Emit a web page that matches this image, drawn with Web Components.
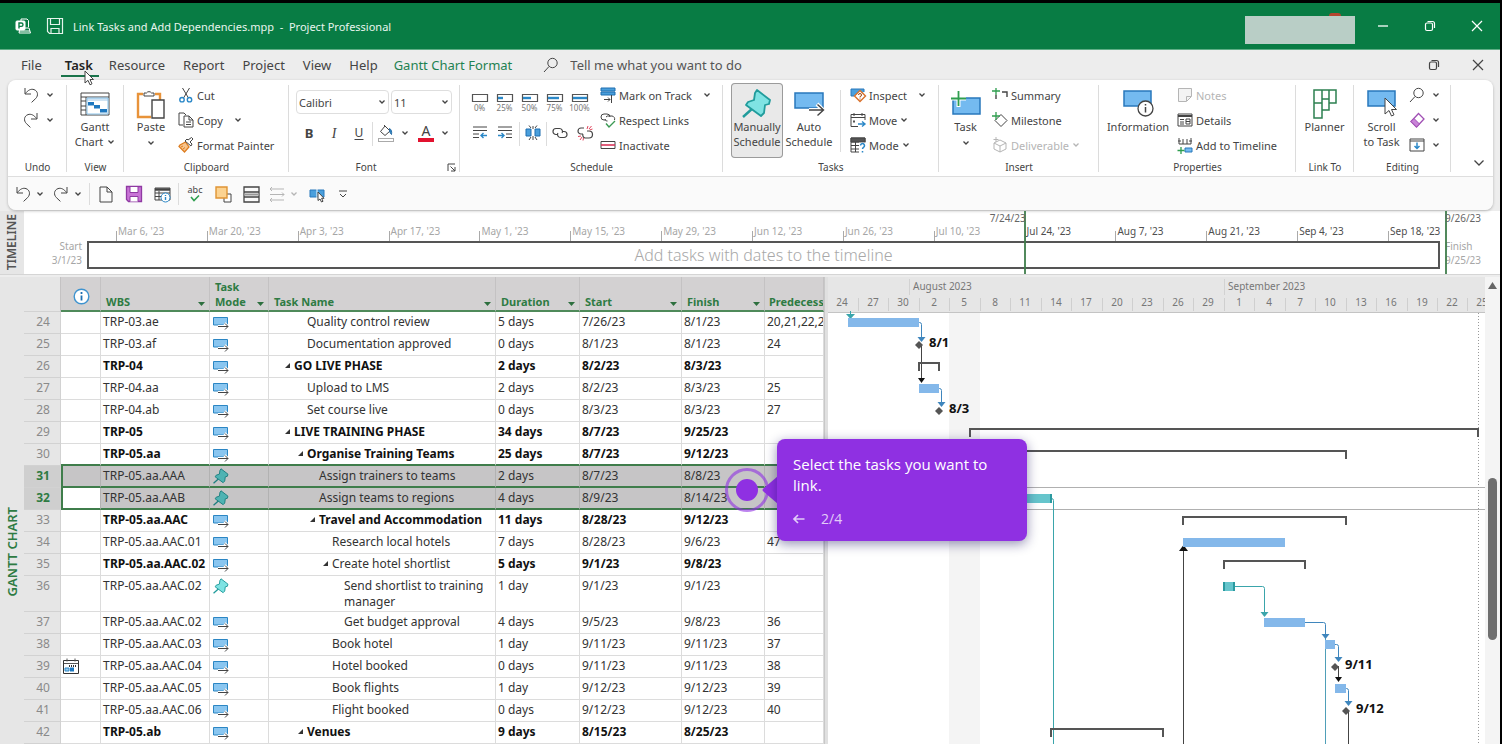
<!DOCTYPE html>
<html lang="en">
<head>
<meta charset="utf-8">
<title>Link Tasks and Add Dependencies.mpp - Project Professional</title>
<style>
  html, body { height: 100%; margin: 0; background: #000; overflow: hidden; }
  body { font-family: "Noto Sans", "Open Sans", sans-serif; font-size: 12px; color: #444; }
</style>
</head>
<body>
<project-window></project-window>

<script>
(function() {
'use strict';

const PIN = (fill, line) => `<path d="M1 28l10-9" stroke="${line}" stroke-width="2.400" fill="none"/><path d="M15 1l13 10-1 4-4 1-1 8-3 3L4 16l2-3 6-2 1-7z" fill="${fill}" stroke="${line}" stroke-width="1.800" stroke-linejoin="round"/>`;
const PERCENT = (w) => `<path d="M.5 1.500h15v7H.5z" fill="#fff" stroke="#555" stroke-width="1.200"/><path d="M1 5h${w}" stroke="#2b88c8" stroke-width="2.400"/>`;
const UNDO = '<path d="M2 1v6h6M2.400 6.600C5 3 8 1.600 11 2.600c4 1.400 4.600 6 1.600 9L8.600 15.400"/>';
const REDO = '<path d="M14 1v6H8M13.600 6.600C11 3 8 1.600 5 2.600c-4 1.400-4.600 6-1.600 9l4 3.800"/>';

// name: [viewBox width, viewBox height, markup]
const ICONS = {
  app: [16, 16, '<path d="M6 5V1h6l1.500 1.500V9M9 10h5l1.500 5H4l.5-3" stroke="#fff"/><path d="M4 13h11" stroke="#fff"/><rect x="1" y="3" width="9" height="9" rx="1" fill="#fff"/><path d="M4 10.500V5h2.300a1.700 1.700 0 0 1 0 3.400H4" stroke="#087a43" stroke-width="1.400"/>'],
  floppy: [18, 18, '<path d="M1.500 1.500h15v15h-13l-2-2zM4.500 1.500v6h9v-6M5 16.500v-5h8v5" stroke="#e6f4ec" stroke-width="1.200"/>'],
  minimize: [12, 12, '<path d="M1 6h10" stroke-width="1.300"/>'],
  restore: [12, 12, '<rect x="1.500" y="3" width="7" height="7.500" rx="1.500" stroke-width="1.200"/><path d="M3.500 1.500h5a2 2 0 0 1 2 2V8" stroke-width="1.200"/>'],
  close: [12, 12, '<path d="M1 1l10 10M11 1L1 11" stroke-width="1.200"/>'],
  search: [16, 16, '<circle cx="9.500" cy="6" r="4.700"/><path d="M6 9.500L1 15"/>'],
  chevron: [8, 6, '<path d="M1.500 1.500L4 4l2.500-2.500" stroke-width="1.300"/>'],
  collapse: [12, 8, '<path d="M1.500 1.500L6 6l4.500-4.500" stroke-width="1.300"/>'],
  undo: [16, 16, UNDO],
  redo: [16, 16, REDO],
  gantt: [30, 24, '<path d="M1 1h28v22H1zM1 5h28M6 5v18M1 9h5M1 14h5M1 18h5" /><path d="M7 6h21v3H7z" fill="#cfe3f3" stroke="none"/><path d="M7 6h21v16H7z" stroke="#8cc4ea" /><path d="M8 10h6v3.500H8zM14 13h6v3.500h-6zM20 17h7v3.500h-7z" fill="#1e78c0" stroke="none"/>'],
  paste: [30, 31, '<path d="M7 6H2v23h13M19 6h5v6" stroke="#e8933a" stroke-width="2.400"/><path d="M8 8V5h2.500a3 3 0 0 1 5 0H18v3z" fill="#fff"/><path d="M16 12h12v18H16z" fill="#fff" stroke-width="1.400"/>'],
  cut: [16, 16, '<path d="M4.500 1l6 10M11.500 1l-6 10"/><circle cx="4" cy="12.700" r="2.200" stroke="#2b88c8" stroke-width="1.400"/><circle cx="11.500" cy="12.700" r="2.200" stroke="#2b88c8" stroke-width="1.400"/>'],
  copy: [16, 16, '<path d="M5 13H1V1h5l2 2"/><path d="M6 4h5l4 4v7H6z" fill="#fff"/><path d="M11 4v4h4M8 10h5M8 12.500h5"/>'],
  painter: [16, 16, '<path d="M7.500 5L2 8l-1 1.500L6.500 15 11 10z" fill="#f7c48c" stroke="#dd7d20" stroke-width="1.300"/><path d="M3 10l2-1M5 12l2-1.500" stroke="#dd7d20"/><path d="M7 4l6 5 1-2-2-2 3-3-1.500-1.500L10 3 9 2z" fill="#fff"/>'],
  bold: [16, 16, '<text x="8" y="13" text-anchor="middle" font-size="13" font-weight="700">B</text>'],
  italic: [16, 16, '<text x="8" y="13" text-anchor="middle" font-size="14" font-style="italic" font-family="Liberation Serif, serif">I</text>'],
  underline: [16, 16, '<text x="8" y="12" text-anchor="middle" font-size="12">U</text><path d="M3.500 14.500h9"/>'],
  fill: [16, 18, '<path d="M7 2l5 5-5 4.500L2.500 7.500zM6 1l3 3"/><path d="M11.500 4.500c2 1 2.500 3 2 6-1.500-1-2-3-2-6z" fill="#2b88c8" stroke="#2b6fa8"/><rect x=".5" y="14.500" width="15" height="3" fill="#fff" stroke="#aaa"/>'],
  fontcolor: [16, 18, '<text x="8" y="12" text-anchor="middle" font-size="14">A</text><path d="M0 14h16v4H0z" fill="#e2122f" stroke="none"/>'],
  p0: [16, 10, PERCENT(0)],
  p25: [16, 10, PERCENT(5)],
  p50: [16, 10, PERCENT(8)],
  p75: [16, 10, PERCENT(11)],
  p100: [16, 10, PERCENT(14)],
  outdent: [16, 16, '<path d="M1 2h14M1 5.500h14M1 9h6M1 12.500h6"/><path d="M15 10.500H9M11.500 8L9 10.500l2.500 2.500" stroke="#2b88c8" stroke-width="1.400"/>'],
  indent: [16, 16, '<path d="M1 2h14M1 5.500h14M9 9h6M9 12.500h6"/><path d="M1 10.500h6M4.500 8L7 10.500 4.500 13" stroke="#2b88c8" stroke-width="1.400"/>'],
  split: [16, 16, '<path d="M1 4h5v7H1zM10 4h5v7h-5z" fill="#4a9fdc" stroke="#1e6fb0"/><path d="M8 1v3M4 .5L6 3M12 .5L10 3M8 15v-4M4 15l2-3M12 15l-2-3"/>'],
  link: [16, 16, '<path d="M6 9.500H4a3 3 0 0 1 0-6h3.500a3 3 0 0 1 2.600 4.500" stroke-width="1.200"/><path d="M10 6.500h2a3 3 0 0 1 0 6H8.500a3 3 0 0 1-2.600-4.500" stroke-width="1.200"/>'],
  unlink: [16, 16, '<path d="M6 9H4a3 3 0 0 1 0-6h3M10 6h2a3 3 0 0 1 0 7H8a3 3 0 0 1-2-4" stroke-width="1.200"/><path d="M11 1l-1 3M14.500 1L12 4M15.500 4l-3 1M4 11l-3 .5M5 12l-2 3M6.500 13L6 15.500" stroke="#e0455d"/>'],
  track: [16, 16, '<path d="M1 1h14v3H1zM1 5h14v3H1z" fill="#4a9fdc" stroke="#1e6fb0"/><path d="M11.500 8v8M4 12.500h6M8 10.500l2 2-2 2" />'],
  respect: [16, 16, '<path d="M6 8H4a3 3 0 0 1 0-6h3a3 3 0 0 1 3 3M6 5a3 3 0 0 1 3-1h3a3 3 0 0 1 2.500 4"/><path d="M5 7c.5 1.500 1 2 2.500 2" /><path d="M6 11.500l3 3.500 6-6" stroke="#3c9a55" stroke-width="1.400"/>'],
  inactivate: [16, 16, '<path d="M1 4.500h14v7H1z" /><path d="M1 8h14" stroke="#d9365a" stroke-width="1.600"/>'],
  pin: [30, 29, PIN('#7fe3e3', '#219c9c')],
  pinDark: [30, 29, PIN('#4fb3b3', '#1d7f80')],
  auto: [31, 24, '<path d="M1 1h28v15H1z" fill="#74baf0" stroke="#2878bc" stroke-width="1.500"/><path d="M15 18h14M23 12l6 6-6 6" stroke="#fff" stroke-width="4"/><path d="M15 18h14M23.500 12.500L29.500 18l-6 5.500" stroke-width="1.400"/>'],
  mode: [16, 13, '<path d="M.5.5h14v7.500H.5z" fill="#8ac6f0" stroke="#2b86c4"/><path d="M5 9.500h10M11.500 6.500l3.500 3-3.500 3" stroke="#fff" stroke-width="3"/><path d="M5 9.500h10M12 6.500l3 3-3 3" stroke="#444"/>'],
  inspect: [16, 16, '<path d="M4 9H1V2h13v3" fill="#4a9fdc" stroke="#2878bc"/><path d="M10 3.500l5.500 5.500L10 14.500 4.500 9z" fill="#fff" stroke="#d9702a" stroke-width="1.400"/><path d="M8.500 8a1.500 1.500 0 1 1 1.500 1.500v1M10 11.500v1" stroke="#a04a18"/>'],
  move: [16, 16, '<path d="M15 8V2.500H1v12h7M1 5.500h14M4 1v3M12 1v3"/><path d="M3 8.500h2v2H3z" fill="#555" stroke="none"/><path d="M8 12h7M12 9.500l3 2.500-3 2.500" stroke="#2b88c8" stroke-width="1.400"/>'],
  mode2: [16, 16, '<path d="M1 1h14v14H1zM1 5h14M1 8.500h9M1 12h9M5.500 5v10M10 5v10"/><path d="M1 1h14v4H1z" fill="#555"/><path d="M9 5.500h7V16H9z" fill="#fff" stroke="none"/><path d="M10.500 8.500a2 2 0 1 1 3.200 1.600c-1 .7-1.200 1-1.200 2M12.500 14v1.500" stroke="#2b88c8" stroke-width="1.500"/>'],
  addtask: [30, 25, '<path d="M2 7h27v16H2z" fill="#74baf0" stroke="#2878bc" stroke-width="1.500"/><path d="M7.500 0v16M0 7.500h15" stroke="#fff" stroke-width="4"/><path d="M7.500 0v15M0 7.500h15" stroke="#2f9e4f" stroke-width="1.800"/>'],
  summary: [16, 16, '<path d="M4 1v7M0 4h8" stroke="#2f9e4f" stroke-width="1.300"/><path d="M4 8v4M10 5h5v5" stroke-width="1.400"/>'],
  milestone: [16, 16, '<path d="M9 2.500L15 8.500l-6 6-6-6z" fill="#fff"/><path d="M4 0v8M0 4h8" stroke="#2f9e4f" stroke-width="1.300"/>'],
  deliverable: [16, 16, '<path d="M8 3l6 3v6l-6 3-6-3V6zM2 6l6 3 6-3M8 9v6M4 0v5M1.500 2.500h5" />'],
  information: [30, 28, '<path d="M1 1h27v15H1z" fill="#74baf0" stroke="#2878bc" stroke-width="1.500"/><circle cx="22.500" cy="18.500" r="7.500" fill="#fff" stroke-width="1.300"/><path d="M22.500 17v5.500M22.500 14v1.500" stroke-width="1.500"/>'],
  notes: [16, 16, '<path d="M1.500 1.500h13v8l-5 5h-8z" fill="#f3f3f3"/><path d="M14 9.500H9.500V14"/>'],
  details: [16, 16, '<path d="M1 2h14v12H1z"/><path d="M1 4h14" stroke-width="2"/><path d="M3 7.500h4M3 10h4M3 12h4M9 7h4v5H9zM9 9.500h4"/>'],
  addtimeline: [16, 17, '<path d="M2 1v6h12V1M6 2v5M10 2v5M1 4h3M12 4h3"/><path d="M8 11h7v4H8z" fill="#74baf0" stroke="#2878bc"/><path d="M4 10v7M.5 13.500h7" stroke="#2f9e4f" stroke-width="1.300"/>'],
  planner: [24, 30, '<path d="M1 1h22v13h-7v7H9v8H1zM9 1v20M16 1v13M1 14h8M9 10h7" stroke="#2d8050" stroke-width="1.500"/>'],
  scroll: [30, 28, '<path d="M1 1h27v15H1z" fill="#74baf0" stroke="#2878bc" stroke-width="1.500"/><path d="M18 8v16l4-3.500 2.500 5.500 2.500-1.200-2.500-5.300h5z" fill="#fff"/>'],
  eraser: [16, 16, '<path d="M9.500 1.500L15 7l-7.500 8L2 9.500z" fill="#fff" stroke="#a04fb4" stroke-width="1.300"/><path d="M5 6.500l5.500 5.500-3 3L2 9.500z" fill="#c983d8" stroke="#a04fb4"/>'],
  filldown: [16, 16, '<path d="M1 2h14v12H1zM1 4h14"/><path d="M8 5.500v6M5.500 9L8 11.500 10.500 9" stroke="#2b88c8" stroke-width="1.500"/>'],
  launcher: [9, 9, '<path d="M1 8V1h7M3.500 3.500l4.500 4.500M8 4v4H4"/>'],
  doc: [14, 17, '<path d="M1 1h7l5 5v10H1zM8 1v5h5"/>'],
  savePurple: [18, 18, '<path d="M1.500 1.500h15v15h-13l-2-2z" fill="#c873d6" stroke="#8f3aa2" stroke-width="1.300"/><path d="M5 1.500h8v6H5zM5 16.500v-5h8v5" fill="#fff" stroke="#8f3aa2"/>'],
  tableInfo: [17, 17, '<path d="M1 2h15v12H1zM1 7h15M1 10.500h15M5 5v9"/><path d="M1 3.500h15" stroke-width="2.500"/><circle cx="11.500" cy="11.500" r="4.500" fill="#fff" stroke="#2b88c8"/><path d="M11.500 11v3M11.500 9v1" stroke="#2b88c8" stroke-width="1.400"/>'],
  spell: [18, 18, '<text x="9" y="8" text-anchor="middle" font-size="9">abc</text><path d="M5 12l3 3.500 5-5" stroke="#2f9e4f" stroke-width="1.600"/>'],
  shapes: [17, 17, '<path d="M9 8h7v8H9z" fill="#fff"/><path d="M1 1h11v11H1z" fill="#fcd391" stroke="#df9434" stroke-width="1.400"/>'],
  rows: [17, 17, '<path d="M1 1h15v15H1zM1 6h15M1 11h15" stroke-width="1.300"/><path d="M1 8.500h15" stroke="#999" stroke-width="2"/>'],
  arrange: [16, 17, '<path d="M1 3h14M1 8.500h14M1 14h14M3 1L1 3l2 2M13 6.500l2 2-2 2M3 12l-2 2 2 2"/>'],
  pick: [17, 15, '<path d="M1 3h14v7H1z" fill="#4a9fdc" stroke="#2878bc"/><path d="M8 2v9" stroke="#fff"/><path d="M9 5v8.500l2-1.500 1.500 3 1.500-.7-1.400-3H15z" fill="#fff"/>'],
  more: [10, 10, '<path d="M1 2h8"/><path d="M2 5l3 3 3-3"/>'],
  infoHead: [17, 17, '<circle cx="8.500" cy="8.500" r="7.300" fill="#fff" stroke="#3e93cf" stroke-width="1.400"/><path d="M8.500 7.500v5M8.500 4v2" stroke="#1d6fb2" stroke-width="1.800"/>'],
  calendar: [16, 16, '<path d="M.5 2.500h15v13H.5z" fill="#fff"/><path d="M1 5.500h14M4 .5v3M12 .5v3" stroke="#555"/><path d="M6 8h7" stroke-dasharray="1 1" stroke-width="2"/><path d="M2 10h4v3H2z" fill="#9cc9ea" stroke="#2b88c8"/><path d="M7 9.500h4v4H7z" fill="#1e78c0" stroke="none"/>'],
  back: [12, 10, '<path d="M11.500 5H1.500M5 1L1 5l4 4" stroke-width="1.700"/>'],
  cursor: [10, 16, '<path d="M1 1v12l3-2.700 2 4.500 2-1-2-4.300h3.500z" fill="#fff"/>'],
};

function svg(name, scale = 1) {
  const [w, h, body] = ICONS[name];
  return `<svg width="${Math.round(w * scale)}" height="${Math.round(h * scale)}" viewBox="0 0 ${w} ${h}" fill="none" stroke="currentColor" aria-hidden="true">${body.replace(/<text /g, '<text fill="currentColor" stroke="none" ')}</svg>`;
}

const BUTTON_RESET = `
  * { box-sizing: border-box; }
  button, input, select { font: inherit; color: inherit; background: none; border: 0; margin: 0; padding: 0; }
  svg { display: block; flex: none; overflow: visible; }
`;

/* ---------- title bar ---------- */
customElements.define('title-bar', class extends HTMLElement {
  constructor() {
    super();
    this.attachShadow({mode: 'open'}).innerHTML = `
      <style>
      ${BUTTON_RESET}
      :host { display: flex; align-items: center; height: 47px; background: #087c44; color: #fff; font-size: 11px; padding-left: 15px; box-sizing: border-box; border-bottom: 1px solid #5fae86; }
      .save { margin: 0 9px 0 15px; }
      .name { color: #e9f5ee; white-space: pre; }
      .spacer { flex: 1; }
      .account { position: relative; width: 110px; height: 28px; margin: 8px 4px 0 0; background: #b9cec6; }
      .account::before { content: ""; position: absolute; right: 14px; top: -3px; width: 12px; height: 3px; border-radius: 6px 6px 0 0; background: #b5452f; }
      .win { width: 47px; height: 47px; display: grid; place-items: center; }
      </style>
      ${svg('app')}
      <button class="save" aria-label="Save">${svg('floppy')}</button>
      <span class="name">Link Tasks and Add Dependencies.mpp  -  Project Professional</span>
      <span class="spacer"></span>
      <span class="account"></span>
      <button class="win" aria-label="Minimize">${svg('minimize')}</button>
      <button class="win" aria-label="Restore">${svg('restore')}</button>
      <button class="win" aria-label="Close">${svg('close')}</button>
    `;
  }
});

/* ---------- ribbon tabs ---------- */
customElements.define('ribbon-tabs', class extends HTMLElement {
  constructor() {
    super();
    this.attachShadow({mode: 'open'}).innerHTML = `
      <style>
      ${BUTTON_RESET}
      :host { position: relative; display: flex; height: 30px; font-size: 13px; padding-left: 12px; box-sizing: border-box; color: #444; }
      .tab { padding: 0 9px; }
      .tab[aria-selected=true] { position: relative; margin-left: 7px; padding: 0 7px; font-weight: 600; color: #222; }
      .tab[aria-selected=true]::after { content: ""; position: absolute; left: 3px; right: 1px; bottom: 3px; height: 2px; background: #19734a; }
      .tab.context { margin-left: -2px; color: #1f8252; }
      label { display: flex; align-items: center; gap: 11px; margin-left: 22px; flex: 1; }
      input { flex: 1; outline: 0; }
      input::placeholder { color: #555; opacity: 1; }
      .win { width: 44px; display: grid; place-items: center; }
      .pointer { position: absolute; left: 84px; top: 20px; z-index: 2; }
      </style>
      <button class="tab">File</button>
      <button class="tab" aria-selected="true">Task</button>
      <button class="tab">Resource</button>
      <button class="tab">Report</button>
      <button class="tab">Project</button>
      <button class="tab">View</button>
      <button class="tab">Help</button>
      <button class="tab context">Gantt Chart Format</button>
      <label>${svg('search')}<input type="text" placeholder="Tell me what you want to do" aria-label="Tell me what you want to do"></label>
      <button class="win" aria-label="Restore document">${svg('restore')}</button>
      <button class="win" aria-label="Close document">${svg('close')}</button>
      <span class="pointer">${svg('cursor')}</span>
    `;
  }
});

/* ---------- ribbon parts ---------- */
customElements.define('ribbon-group', class extends HTMLElement {
  constructor() {
    super();
    this.attachShadow({mode: 'open'}).innerHTML = `
      <style>
      ${BUTTON_RESET}
      :host { display: flex; flex-direction: column; flex: none; box-sizing: border-box; margin-top: 3px; font-size: 11px; background: linear-gradient(#dcdcdc, #dcdcdc) right 2px / 1px 87px no-repeat; }
      .body { display: flex; height: 75px; }
      .foot { display: flex; align-items: center; height: 18px; font-size: 10px; }
      .foot span { flex: 1; text-align: center; }
      .foot button { padding: 0 4px; }
      </style>
      <div class="body"><slot></slot></div>
      <div class="foot"><span></span></div>
    `;
  }
  connectedCallback() {
    this.shadowRoot.querySelector('.foot span').textContent = this.getAttribute('label');
    if (this.hasAttribute('launcher')) {
      this.shadowRoot.querySelector('.foot').insertAdjacentHTML('beforeend', `<button aria-label="More settings">${svg('launcher')}</button>`);
    }
  }
});

customElements.define('ribbon-button', class extends HTMLElement {
  connectedCallback() {
    const label = this.getAttribute('label') || '';
    const drop = this.getAttribute('drop');
    const large = this.hasAttribute('large');
    const chevron = `<i>${svg('chevron')}</i>`;
    const text = !label ? '' : label.split('|').map((line, i, all) =>
      `<span>${line}${large && drop === 'menu' && i === all.length - 1 ? chevron : ''}</span>`).join('');
    const tail = (drop === 'split' || (drop && !large)) ? chevron : '';
    this.attachShadow({mode: 'open'}).innerHTML = `
      <style>
      ${BUTTON_RESET}
      :host { display: block; }
      button { display: flex; align-items: center; height: 25px; gap: 3px; padding-bottom: 1px; white-space: nowrap; line-height: 15px; }
      .pic { display: grid; place-items: center; min-width: 16px; }
      :host([drop=split]) i { margin-left: 8px; }
      :host([bare]) button { gap: 7px; }
      :host([bare]) i { margin: 0; }
      :host([disabled]) button { color: #b5b5b5; }
      :host([large]) button { flex-direction: column; gap: 0; height: 75px; width: 100%; padding-top: 5px; justify-content: flex-start; border-radius: 4px; }
      :host([large]) .pic { height: 31px; }
      :host([large]) span { display: flex; align-items: center; gap: 4px; }
      :host([large]) > button > i { margin: 6px 0 0; }
      :host([pressed]) button { background: #e9e9e9; box-shadow: inset 0 0 0 1px #9b9b9b; }
      </style>
      <button ${this.hasAttribute('disabled') ? 'disabled' : ''} ${label ? '' : `aria-label="${this.getAttribute('icon')}"`}>
        <div class="pic">${svg(this.getAttribute('icon'))}</div>${text}${tail}
      </button>
    `;
  }
});

customElements.define('percent-button', class extends HTMLElement {
  connectedCallback() {
    const v = this.getAttribute('value');
    this.attachShadow({mode: 'open'}).innerHTML = `
      <style>
      ${BUTTON_RESET}
      :host { display: block; width: 25px; }
      button { display: flex; flex-direction: column; align-items: center; width: 25px; font-size: 8px; line-height: 9px; color: #777; padding-top: 10px; }
      </style>
      <button>${svg('p' + v)}<span>${v}%</span></button>
    `;
  }
});

customElements.define('ribbon-select', class extends HTMLElement {
  connectedCallback() {
    this.attachShadow({mode: 'open'}).innerHTML = `
      <style>
      ${BUTTON_RESET}
      :host { display: block; }
      label { display: grid; grid-template-columns: 1fr; align-items: center; border: 1px solid #dedede; border-radius: 4px; height: 24px; }
      select { appearance: none; grid-area: 1 / 1; width: 100%; height: 100%; padding-left: 2px; outline: 0; }
      i { grid-area: 1 / 1; justify-self: end; margin-right: 2px; pointer-events: none; }
      </style>
      <label><select aria-label="${this.getAttribute('name')}"><option>${this.getAttribute('value')}</option></select><i>${svg('chevron')}</i></label>
    `;
  }
});

customElements.define('ribbon-bar', class extends HTMLElement {
  constructor() {
    super();
    this.attachShadow({mode: 'open'}).innerHTML = `
      <style>
      ${BUTTON_RESET}
      :host { display: flex; height: 96px; background: #fff; border-radius: 8px 8px 0 0; }
      .stack { display: flex; flex-direction: column; }
      .row { display: flex; align-items: center; height: 38px; }
      .row > ribbon-button { width: 25px; }
      .row > ribbon-button[drop] { width: 38px; }
      .row.tools { height: 25px; padding-left: 5px; }
      .sep { width: 1px; height: 24px; margin-right: 5px; background: #dcdcdc; }
      .tall { width: 1px; height: 62px; align-self: center; margin: 0 9px 0 5px; background: #dcdcdc; }
      ribbon-button[large] { flex: none; }
      .undo { padding-left: 15px; }
      .more { margin-left: auto; align-self: flex-end; padding: 0 8px 9px; }
      </style>

      <ribbon-group label="Undo" style="width:59px">
        <div class="stack undo">
          <ribbon-button icon="undo" drop="menu" bare></ribbon-button>
          <ribbon-button icon="redo" drop="menu" bare></ribbon-button>
        </div>
      </ribbon-group>
      <ribbon-group label="View" style="width:57px">
        <ribbon-button large icon="gantt" label="Gantt|Chart" drop="menu" style="width:56px"></ribbon-button>
      </ribbon-group>
      <ribbon-group label="Clipboard" style="width:165px">
        <ribbon-button large icon="paste" label="Paste" drop="split" style="width:54px"></ribbon-button>
        <div class="stack">
          <ribbon-button icon="cut" label="Cut"></ribbon-button>
          <ribbon-button icon="copy" label="Copy" drop="split"></ribbon-button>
          <ribbon-button icon="painter" label="Format Painter"></ribbon-button>
        </div>
      </ribbon-group>
      <ribbon-group label="Font" launcher style="width:171px">
        <div class="stack" style="padding-left:7px">
          <div class="row" style="gap:2px">
            <ribbon-select name="Font" value="Calibri" style="width:93px"></ribbon-select>
            <ribbon-select name="Font size" value="11" style="width:61px"></ribbon-select>
          </div>
          <div class="row tools">
            <ribbon-button icon="bold"></ribbon-button>
            <ribbon-button icon="italic"></ribbon-button>
            <ribbon-button icon="underline" style="width:21px"></ribbon-button>
            <span class="sep"></span>
            <ribbon-button icon="fill" drop="menu" bare style="width:40px"></ribbon-button>
            <ribbon-button icon="fontcolor" drop="menu" bare></ribbon-button>
          </div>
        </div>
      </ribbon-group>
      <ribbon-group label="Schedule" style="width:263px">
        <div class="stack" style="padding-left:7px;width:140px">
          <div class="row" style="align-items:flex-start">
            <percent-button value="0"></percent-button>
            <percent-button value="25"></percent-button>
            <percent-button value="50"></percent-button>
            <percent-button value="75"></percent-button>
            <percent-button value="100"></percent-button>
          </div>
          <div class="row tools">
            <ribbon-button icon="outdent"></ribbon-button>
            <ribbon-button icon="indent" style="width:22px"></ribbon-button>
            <span class="sep"></span>
            <ribbon-button icon="split" style="width:21px"></ribbon-button>
            <span class="sep"></span>
            <ribbon-button icon="link"></ribbon-button>
            <ribbon-button icon="unlink" style="width:16px"></ribbon-button>
          </div>
        </div>
        <div class="stack">
          <ribbon-button icon="track" label="Mark on Track" drop="split"></ribbon-button>
          <ribbon-button icon="respect" label="Respect Links"></ribbon-button>
          <ribbon-button icon="inactivate" label="Inactivate"></ribbon-button>
        </div>
      </ribbon-group>
      <ribbon-group label="Tasks" style="width:216px">
        <ribbon-button large pressed icon="pin" label="Manually|Schedule" style="width:52px;margin-left:8px"></ribbon-button>
        <ribbon-button large icon="auto" label="Auto|Schedule" style="width:52px"></ribbon-button>
        <span class="tall"></span>
        <div class="stack">
          <ribbon-button icon="inspect" label="Inspect" drop="split"></ribbon-button>
          <ribbon-button icon="move" label="Move" drop="menu"></ribbon-button>
          <ribbon-button icon="mode2" label="Mode" drop="menu"></ribbon-button>
        </div>
      </ribbon-group>
      <ribbon-group label="Insert" style="width:160px">
        <ribbon-button large icon="addtask" label="Task" drop="split" style="width:53px"></ribbon-button>
        <div class="stack">
          <ribbon-button icon="summary" label="Summary"></ribbon-button>
          <ribbon-button icon="milestone" label="Milestone"></ribbon-button>
          <ribbon-button disabled icon="deliverable" label="Deliverable" drop="menu"></ribbon-button>
        </div>
      </ribbon-group>
      <ribbon-group label="Properties" style="width:197px">
        <ribbon-button large icon="information" label="Information" style="width:78px"></ribbon-button>
        <div class="stack">
          <ribbon-button disabled icon="notes" label="Notes"></ribbon-button>
          <ribbon-button icon="details" label="Details"></ribbon-button>
          <ribbon-button icon="addtimeline" label="Add to Timeline"></ribbon-button>
        </div>
      </ribbon-group>
      <ribbon-group label="Link To" style="width:58px">
        <ribbon-button large icon="planner" label="Planner" style="width:57px"></ribbon-button>
      </ribbon-group>
      <ribbon-group label="Editing" style="width:97px">
        <ribbon-button large icon="scroll" label="Scroll|to Task" style="width:55px"></ribbon-button>
        <div class="stack">
          <ribbon-button icon="search" drop="menu" bare></ribbon-button>
          <ribbon-button icon="eraser" drop="menu" bare></ribbon-button>
          <ribbon-button icon="filldown" drop="menu" bare></ribbon-button>
        </div>
      </ribbon-group>
      <button class="more" aria-label="Ribbon display options">${svg('collapse')}</button>
    `;
  }
});

/* ---------- quick access bar ---------- */
customElements.define('quick-bar', class extends HTMLElement {
  constructor() {
    super();
    const btn = (name, cls = '') => `<button class="${cls}" aria-label="${name}">${svg(name)}</button>`;
    this.attachShadow({mode: 'open'}).innerHTML = `
      <style>
      ${BUTTON_RESET}
      :host { display: flex; align-items: center; box-sizing: border-box; height: 34px; padding: 1px 0 0 3px; background: #fafafa; border-top: 1px solid #dedede; border-radius: 0 0 8px 8px; }
      button { display: grid; place-items: center; width: 28px; height: 28px; }
      .s { width: 24px; }
      .d { width: 10px; margin-right: 4px; }
      hr { width: 1px; height: 22px; border: 0; margin: 0 2px; background: #dcdcdc; }
      .off { color: #b5b5b5; }
      </style>
      ${btn('undo', 's')}${btn('chevron', 'd')}${btn('redo', 's')}${btn('chevron', 'd')}
      <hr>
      ${btn('doc')}${btn('savePurple')}${btn('tableInfo')}
      <hr>
      ${btn('spell')}${btn('shapes')}${btn('rows')}${btn('arrange', 's off')}${btn('chevron', 'd off')}${btn('pick')}${btn('more', 's')}
    `;
  }
});

/* ---------- timeline ---------- */
customElements.define('timeline-view', class extends HTMLElement {
  constructor() {
    super();
    const marks = ['Mar 6', 'Mar 20', 'Apr 3', 'Apr 17', 'May 1', 'May 15', 'May 29', 'Jun 12', 'Jun 26', 'Jul 10',
      'Jul 24', 'Aug 7', 'Aug 21', 'Sep 4', 'Sep 18'];
    this.attachShadow({mode: 'open'}).innerHTML = `
      <style>
      * { box-sizing: border-box; }
      :host { display: grid; grid-template-columns: 24px 58px minmax(0, 1fr) 55px; height: 64px; background: #fff; font-size: 10px; line-height: 14px; color: #a6a6a6; border-bottom: 1px solid #d5d5d5; box-sizing: border-box; }
      .side { display: grid; place-items: center; background: #e6e6e6; color: #555; font-size: 12px; font-weight: 600; }
      .side span { writing-mode: vertical-rl; transform: rotate(180deg); }
      .edge { padding-top: 28px; }
      .start { text-align: right; }
      .middle { position: relative; margin: 0 5px; padding-top: 13px; }
      .scale { display: flex; height: 17px; padding-left: 29px; }
      .scale span { flex: 0 0 calc(100% * 14 / 204); padding-left: 2px; white-space: nowrap; background: linear-gradient(#aaa, #aaa) 0 7px / 1px 10px no-repeat; }
      .scale .now { color: #4e4e4e; }
      .bar { border: 2px solid #555; height: 28px; display: grid; place-items: center; font-size: 16px; font-weight: 300; line-height: 20px; color: #a8a8a8; }
      .limit { position: absolute; top: 0; bottom: 0; width: 2px; background: #3f7d4b; opacity: .9; }
      .limit b { position: absolute; top: 0; font-weight: 400; color: #555; }
      .a { left: calc(100% * 144 / 208); }
      .a b { right: 0; }
      .b { left: calc(100% + 5px); }
      .b b { left: 0; }
      </style>
      <div class="side"><span>TIMELINE</span></div>
      <div class="edge start">Start<br>3/1/23</div>
      <div class="middle">
        <div class="scale">${marks.map((m, i) => `<span class="${i > 9 ? 'now' : ''}">${m}, '23</span>`).join('')}</div>
        <div class="bar">Add tasks with dates to the timeline</div>
        <div class="limit a"><b>7/24/23</b></div>
        <div class="limit b"><b>9/26/23</b></div>
      </div>
      <div class="edge">Finish<br>9/25/23</div>
    `;
  }
});

/* ---------- task sheet ---------- */
// id, wbs, mode (a = auto, m = manual), outline level, name, duration, start, finish, predecessors, flags
// flags: s = summary row, n = summary with a plain name, x = selected, c = constraint indicator
const TASKS = [
  [24, 'TRP-03.ae', 'a', 2, 'Quality control review', '5 days', '7/26/23', '8/1/23', '20,21,22,2', ''],
  [25, 'TRP-03.af', 'a', 2, 'Documentation approved', '0 days', '8/1/23', '8/1/23', '24', ''],
  [26, 'TRP-04', 'a', 1, 'GO LIVE PHASE', '2 days', '8/2/23', '8/3/23', '', 's'],
  [27, 'TRP-04.aa', 'a', 2, 'Upload to LMS', '2 days', '8/2/23', '8/3/23', '25', ''],
  [28, 'TRP-04.ab', 'a', 2, 'Set course live', '0 days', '8/3/23', '8/3/23', '27', ''],
  [29, 'TRP-05', 'a', 1, 'LIVE TRAINING PHASE', '34 days', '8/7/23', '9/25/23', '', 's'],
  [30, 'TRP-05.aa', 'a', 2, 'Organise Training Teams', '25 days', '8/7/23', '9/12/23', '', 's'],
  [31, 'TRP-05.aa.AAA', 'm', 3, 'Assign trainers to teams', '2 days', '8/7/23', '8/8/23', '', 'x'],
  [32, 'TRP-05.aa.AAB', 'm', 3, 'Assign teams to regions', '4 days', '8/9/23', '8/14/23', '', 'x'],
  [33, 'TRP-05.aa.AAC', 'a', 3, 'Travel and Accommodation', '11 days', '8/28/23', '9/12/23', '', 's'],
  [34, 'TRP-05.aa.AAC.01', 'a', 4, 'Research local hotels', '7 days', '8/28/23', '9/6/23', '47', ''],
  [35, 'TRP-05.aa.AAC.02', 'a', 4, 'Create hotel shortlist', '5 days', '9/1/23', '9/8/23', '', 'sn'],
  [36, 'TRP-05.aa.AAC.02', 'm', 5, 'Send shortlist to training manager', '1 day', '9/1/23', '9/1/23', '', ''],
  [37, 'TRP-05.aa.AAC.02', 'a', 5, 'Get budget approval', '4 days', '9/5/23', '9/8/23', '36', ''],
  [38, 'TRP-05.aa.AAC.03', 'a', 4, 'Book hotel', '1 day', '9/11/23', '9/11/23', '37', ''],
  [39, 'TRP-05.aa.AAC.04', 'a', 4, 'Hotel booked', '0 days', '9/11/23', '9/11/23', '38', 'c'],
  [40, 'TRP-05.aa.AAC.05', 'a', 4, 'Book flights', '1 day', '9/12/23', '9/12/23', '39', ''],
  [41, 'TRP-05.aa.AAC.06', 'a', 4, 'Flight booked', '0 days', '9/12/23', '9/12/23', '40', ''],
  [42, 'TRP-05.ab', 'a', 2, 'Venues', '9 days', '8/15/23', '8/25/23', '', 's'],
];

customElements.define('task-sheet', class extends HTMLElement {
  constructor() {
    super();
    const arrow = '<svg class="filter" width="7" height="4" viewBox="0 0 7 4" aria-hidden="true"><path d="M0 0h7L3.500 4z" fill="#2d6f3e"/></svg>';
    const th = (t, filter = true) => `<th scope="col"><div><span>${t}</span>${filter ? arrow : ''}</div></th>`;
    const row = ([id, wbs, mode, level, name, dur, start, finish, pred, flags]) => {
      const sum = flags.includes('s');
      const sel = flags.includes('x');
      const icon = mode === 'a' ? svg('mode') : svg(sel ? 'pinDark' : 'pin', .54);
      const mark = sum ? '<svg class="mark" width="5" height="5" viewBox="0 0 5 5" aria-hidden="true"><path d="M5 0v5H0z" fill="#333"/></svg>' : '';
      return `<tr class="${sum ? 'sum' : ''} ${sel ? 'sel' : ''} ${flags.includes('n') ? 'plain' : ''}">
        <th scope="row">${id}</th><td class="info">${flags.includes('c') ? svg('calendar') : ''}</td><td>${wbs}</td>
        <td class="mode ${mode}">${icon}</td><td class="name l${level}">${mark}${name}</td>
        <td>${dur}</td><td>${start}</td><td>${finish}</td><td>${pred}</td></tr>`;
    };
    this.attachShadow({mode: 'open'}).innerHTML = `
      <style>
      * { box-sizing: border-box; }
      :host { display: block; overflow: hidden; background: #fff; color: #333; }
      table { table-layout: fixed; width: 100%; border-collapse: separate; border-spacing: 0; line-height: 16px; }
      thead th { height: 35px; padding: 0 4px 1px 5px; background: #d3d1d2; border-bottom: 2px solid #4f8a5a; border-right: 1px solid #c4c2c3; text-align: left; vertical-align: bottom; font-size: 11px; line-height: 15px; color: #2e7b43; overflow: hidden; }
      thead th:first-child { background: #e6e6e6; border-bottom: 1px solid #d2d2d2; }
      thead th:nth-child(2) { vertical-align: middle; padding: 9px 0 0 12px; }
      thead th:last-child { padding: 0 0 1px 4px; }
      thead div { display: flex; justify-content: space-between; align-items: flex-end; }
      .filter { flex: none; margin-bottom: 3px; }
      tbody tr { height: 22px; }
      td, tbody th { padding: 2px 0 1px 2px; vertical-align: top; border-right: 1px solid #dcdcdc; border-bottom: 1px solid #dcdcdc; overflow: hidden; }
      td { white-space: nowrap; }
      tbody th { background: #e6e6e6; color: #8a8a8a; font-weight: 400; text-align: center; border-color: #d2d2d2; }
      td.mode { padding: 5px 0 0 3px; }
      td.mode.m { padding-top: 2px; }
      td svg { display: block; }
      .name { white-space: normal; }
      td .mark { display: inline-block; margin: 0 4px 2px -9px; }
      .l1 { padding-left: 25px; }
      .l2 { padding-left: 38px; }
      .l3 { padding-left: 50px; }
      .l4 { padding-left: 63px; }
      .l5 { padding-left: 75px; }
      .sum td { font-weight: 700; color: #111; }
      .plain td.name { font-weight: 400; color: #333; }
      .sel td { background: #c6c5c6; border-color: #b2b2b2; border-bottom: 2px solid #3f7d4b; }
      .sel td.info { border-left: 2px solid #3f7d4b; }
      .sel + .sel td.info { background: #fff; }
      .sel th { background: #cfcfcf; color: #2e7b43; font-weight: 700; }
      /* the row above a selection carries its top edge */
      tr:has(+ .sel):not(.sel) td { border-bottom: 2px solid #3f7d4b; }
      </style>
      <table>
        <colgroup><col style="width:37px"><col style="width:40px"><col style="width:109px"><col style="width:59px"><col><col style="width:84px"><col style="width:102px"><col style="width:83px"><col style="width:59px"></colgroup>
        <thead><tr><th></th><th scope="col" aria-label="Indicators">${svg('infoHead')}</th>${th('WBS')}${th('Task<br>Mode')}${th('Task Name')}${th('Duration')}${th('Start')}${th('Finish')}${th('Predecess', false)}</tr></thead>
        <tbody>${TASKS.map(row).join('')}</tbody>
      </table>
    `;
  }
});

/* ---------- gantt chart ---------- */
customElements.define('gantt-chart', class extends HTMLElement {
  constructor() {
    super();
    const HEAD = 35;
    const x = d => Math.round(d * 10.16 - .6);            // d = days since Jul 24
    const top = id => HEAD + (id - 24) * 22 + (id > 36 ? 14 : 0);
    const mid = id => top(id) + 10;

    const bar = (id, a, b) => `<rect x="${x(a)}" y="${top(id) + 6}" width="${x(b) - x(a)}" height="9" fill="#84b8ea"/>`;
    const manual = (id, a, b) => `<rect x="${x(a) - 1}" y="${top(id) + 6}" width="${x(b) - x(a) + 2}" height="9" fill="#66c5cc"/>
      <path d="M${x(a)} ${top(id) + 6}v9M${x(b)} ${top(id) + 6}v9" stroke="#2b9aa0" stroke-width="2"/>`;
    const summary = (id, a, b) => `<path d="M${x(a)} ${top(id) + 15}v-8H${x(b)}v8" fill="none" stroke="#555" stroke-width="2"/>`;
    const stone = (id, d, label) => {
      const cx = x(d) - 1, cy = top(id) + 11;
      return `<path d="M${cx} ${cy - 4}l4 4-4 4-4-4z" fill="#555"/><text x="${cx + 10}" y="${cy + 2}" font-size="13" font-weight="700" fill="#111">${label}</text>`;
    };
    // a link leaves (px, py), turns down at qx and ends with an arrow head at qy
    const link = (px, py, qx, qy, color) => `<path d="M${px} ${py}.5H${qx - 1.5}q2 0 2 2V${qy - 3}" fill="none" stroke="${color}"/>
      <path d="M${qx - 3.5} ${qy - 5}h8l-4 5z" fill="${color}"/>`;
    const down = (px, py, qy, color, head) => `<path d="M${px}.5 ${py}V${qy}" stroke="${color}"/>` +
      (head ? `<path d="M${px - 3} ${qy - 4}h7l-3.500 5z" fill="#111"/>` : '');

    const BLUE = '#3f86bd', TEAL = '#3aa5ab', DARK = '#444';
    let head = '';
    for (let i = 0; i < 22; i++) {
      const day = new Date(2023, 6, 24 + i * 3).getDate();
      head += `<text x="${x(i * 3) + 15}" y="29" text-anchor="middle">${day}</text><path d="M${x(i * 3 + 3)}.5 21v13" stroke="#cfcfcf"/>`;
    }

    this.attachShadow({mode: 'open'}).innerHTML = `
      <style>
      :host { display: block; overflow: hidden; background: #fff; font-size: 10px; }
      svg { display: block; width: 100%; height: 100%; }
      </style>
      <svg>
        <rect width="100%" height="${HEAD}" fill="#e6e6e6"/>
        <g fill="#777">
          <text x="${x(8) + 4}" y="13">August 2023</text><text x="${x(39) + 4}" y="13">September 2023</text>${head}
        </g>
        <path d="M${x(8)}.5 2v16M${x(39)}.5 2v16" stroke="#d2d2d2"/>
        <path d="M0 35.500H2000" stroke="#c4c4c4"/>
        <rect x="${x(12)}" y="36" width="31" height="100%" fill="#f4f4f4"/>
        <path d="M650.500 36V900" stroke="#999" stroke-dasharray="1 2"/>
        <path d="M0 210.500H2000M0 232.500H2000" stroke="#b0b0b0"/>

        ${down(355, 274, 600, DARK)}<path d="M351 274h9l-4.500-6z" fill="#111"/>
        ${down(497, top(38), 600, '#4f9fb8')}
        ${down(520, top(41) + 12, 600, DARK)}
        ${link(x(22) + 1, mid(32), 225, 900, TEAL)}

        <path d="M22.500 34v4" stroke="${TEAL}"/><path d="M18 37h9l-4.500 5z" fill="${TEAL}"/>
        ${bar(24, 2, 9)}
        ${link(x(9), mid(24), 93, top(25) + 8, BLUE)}
        ${down(93, top(25) + 10, top(27) + 4, DARK, true)}
        ${stone(25, 9.1, '8/1')}
        ${summary(26, 9, 11)}
        ${bar(27, 9, 11)}
        ${link(x(11), mid(27), 113, top(28) + 7, BLUE)}
        ${stone(28, 11.1, '8/3')}
        ${summary(29, 14, 64)}
        ${summary(30, 14, 51)}
        ${manual(31, 14, 16)}
        ${manual(32, 16, 22)}
        ${summary(33, 35, 51)}
        ${bar(34, 35, 45)}
        ${summary(35, 39, 47)}
        ${manual(36, 39, 40)}
        ${link(x(40) + 1, mid(36), 436, top(37) + 5, TEAL)}
        ${bar(37, 43, 47)}
        ${link(x(47), mid(37), 497, top(38) + 5, BLUE)}
        ${bar(38, 49, 50)}
        ${link(x(50), mid(38), 510, top(39) + 6, BLUE)}
        ${down(510, top(39) + 10, top(40) + 3, DARK, true)}
        ${stone(39, 50.1, '9/11')}
        ${bar(40, 50, 51)}
        ${link(x(51), mid(40), 520, top(41) + 6, BLUE)}
        ${stone(41, 51.1, '9/12')}
        ${summary(42, 22, 33)}
      </svg>
    `;
  }
});

customElements.define('scroll-bar', class extends HTMLElement {
  constructor() {
    super();
    this.attachShadow({mode: 'open'}).innerHTML = `
      <style>
      :host { display: flex; flex-direction: column; align-items: center; background: #f4f4f4; }
      svg { margin: 5px 0; }
      .thumb { width: 9px; height: 162px; border-radius: 5px; background: #6f6f6f; margin-top: 184px; }
      </style>
      <svg width="9" height="7" viewBox="0 0 9 7" aria-hidden="true"><path d="M0 7L4.500 0 9 7z" fill="#666"/></svg>
      <div class="thumb"></div>
    `;
  }
});

/* ---------- walkthrough callout ---------- */
customElements.define('tour-tip', class extends HTMLElement {
  constructor() {
    super();
    this.attachShadow({mode: 'open'}).innerHTML = `
      <style>
      ${BUTTON_RESET}
      :host { position: absolute; left: 725px; top: 436px; display: flex; align-items: center; font-family: "Open Sans", sans-serif; }
      .spot { width: 44px; height: 44px; border: 3px solid rgba(143, 48, 226, .6); border-radius: 50%; display: grid; place-items: center; }
      .spot::before { content: ""; width: 22px; height: 22px; border-radius: 50%; background: #8f30e2; }
      .beak { margin: 0 -1px 0 -7px; }
      .card { width: 250px; padding: 15px 16px 12px; background: #8f30e2; color: #fff; border-radius: 8px; box-shadow: 0 3px 12px rgba(20, 10, 90, .45); }
      p { margin: 0; font-size: 15px; font-weight: 500; line-height: 21px; }
      .nav { display: flex; align-items: center; gap: 16px; margin-top: 12px; font-size: 14px; line-height: 21px; color: #e2ccf8; }
      </style>
      <span class="spot"></span>
      <svg class="beak" width="16" height="28" viewBox="0 0 16 28" aria-hidden="true"><path d="M16 0v28L2 16q-3-2 0-4z" fill="#8f30e2"/></svg>
      <div class="card">
        <p><slot></slot></p>
        <div class="nav"><button aria-label="Previous step">${svg('back')}</button><span></span></div>
      </div>
    `;
  }
  connectedCallback() {
    this.shadowRoot.querySelector('.nav span').textContent = this.getAttribute('step');
  }
});

/* ---------- window ---------- */
customElements.define('project-window', class extends HTMLElement {
  constructor() {
    super();
    this.attachShadow({mode: 'open'}).innerHTML = `
      <style>
      :host { position: relative; display: flex; flex-direction: column; height: calc(100vh - 3px); margin: 3px 2px 0 0; background: #ededed; overflow: hidden; box-sizing: border-box; }
      .ribbon { position: relative; margin: 0 7px 1px 8px; border-radius: 8px; box-shadow: 0 1px 3px rgba(0, 0, 0, .25); flex: none; }
      ribbon-tabs { z-index: 1; }
      timeline-view, title-bar, ribbon-tabs { flex: none; }
      .work { flex: 1; min-height: 0; display: grid; grid-template-columns: 24px 800px 4px minmax(0, 1fr) 15px; margin-top: 2px; }
      .side { background: #e6e6e6; color: #2e7b43; font-size: 13px; font-weight: 600; padding-top: 230px; }
      .side span { display: block; writing-mode: vertical-rl; transform: rotate(180deg); line-height: 24px; }
      .split { background: #e0e0e0; border-left: 1px solid #c8c8c8; }
      </style>
      <title-bar></title-bar>
      <ribbon-tabs></ribbon-tabs>
      <div class="ribbon">
        <ribbon-bar></ribbon-bar>
        <quick-bar></quick-bar>
      </div>
      <timeline-view></timeline-view>
      <div class="work">
        <div class="side"><span>GANTT CHART</span></div>
        <task-sheet></task-sheet>
        <div class="split"></div>
        <gantt-chart></gantt-chart>
        <scroll-bar></scroll-bar>
      </div>
      <tour-tip step="2/4">Select the tasks you want to link.</tour-tip>
    `;
  }
});

})();
</script>
</body>
</html>
